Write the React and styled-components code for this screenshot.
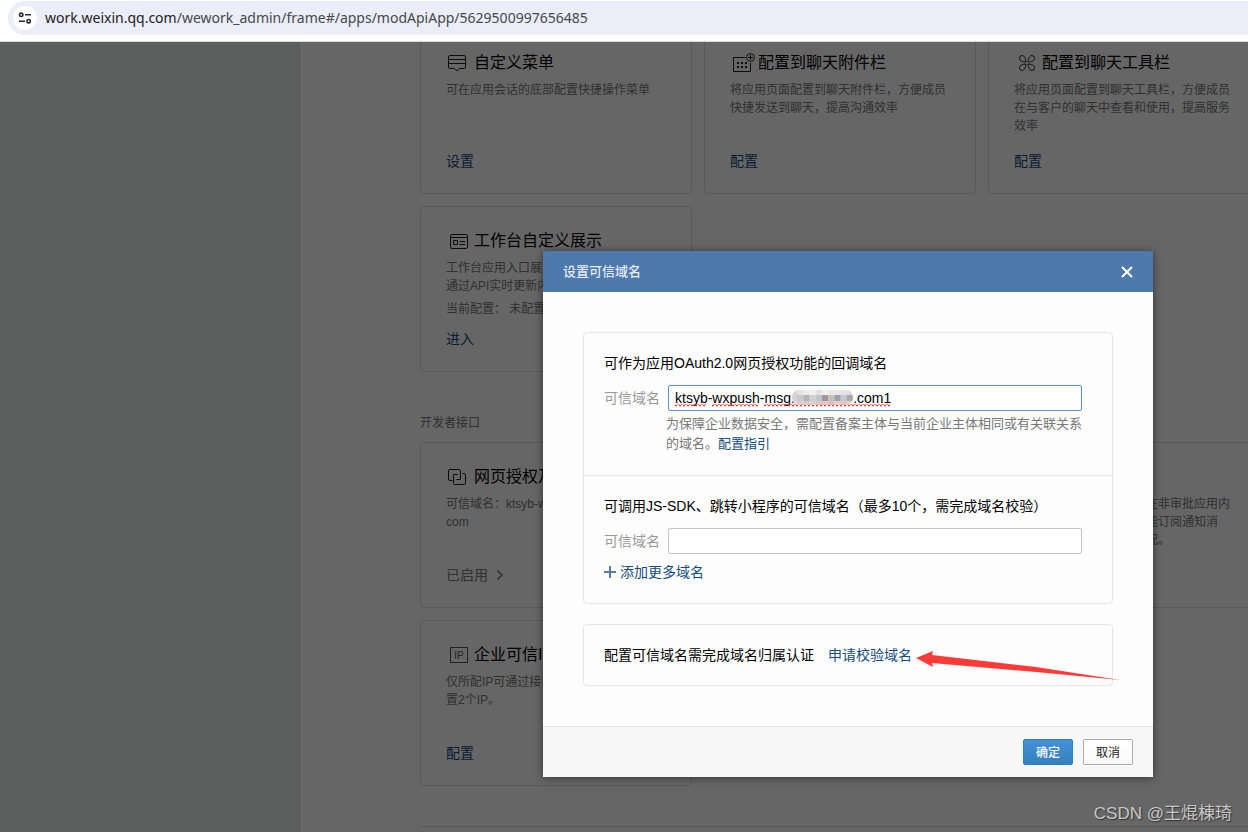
import React, { useState } from "react";
import styled, { createGlobalStyle } from "styled-components";

const GlobalStyle = createGlobalStyle`
  * {
    box-sizing: border-box;
  }

  body {
    margin: 0;
    font-family: "Liberation Sans", "Noto Sans CJK SC", sans-serif;
    font-size: 14px;
    line-height: 20px;
    color: #000;
    background: #fff;
  }

  h2, h3, p {
    margin: 0;
    font-weight: normal;
  }

  a {
    color: #144b80;
    text-decoration: none;
  }

  button, input {
    font-family: inherit;
  }
`;

const Page = styled.div`
  display: flex;
  flex-direction: column;
  height: 100vh;
  overflow: hidden;
`;

const AddressBar = styled.header`
  flex: none;
  padding: 1px 0 6px 8px;
  border-bottom: 1px solid #d9dcdc;
`;

const Address = styled.div`
  display: flex;
  align-items: center;
  gap: 8px;
  height: 34px;
  padding-left: 5px;
  border-radius: 17px 0 0 17px;
  background: #ebeef8;
  font-family: "Noto Sans", "Open Sans", sans-serif;
  font-size: 14px;
  color: #46484c;

  & b {
    font-weight: normal;
    color: #1f2023;
  }
`;

const SiteButton = styled.button`
  display: flex;
  align-items: center;
  justify-content: center;
  width: 24px;
  height: 24px;
  padding: 0;
  border: 0;
  border-radius: 50%;
  background: #fff;
`;

const Workspace = styled.div`
  position: relative;
  display: flex;
  flex: 1;
  min-height: 0;
  overflow: hidden;
`;

const Sidebar = styled.aside`
  flex: none;
  width: 300px;
  background: #e8ecea;
  border-right: 1px solid #dfe3e1;
`;

const Main = styled.main`
  flex: 1;
  min-width: 0;
  margin-top: -14px;
  padding-left: 120px;
  overflow: hidden;
`;

const CardGrid = styled.section`
  display: grid;
  grid-template-columns: repeat(3, 272px);
  grid-auto-rows: 166px;
  gap: 12px;
`;

const SectionLabel = styled.h2`
  padding: 41px 0 9px;
  font-size: 12px;
  line-height: 20px;
  color: #787878;
`;

const Divider = styled.div`
  margin-top: 40px;
  border-top: 1px solid #dfdfdf;
`;

const CardBox = styled.article`
  display: flex;
  flex-direction: column;
  padding: 22px 25px;
  border: 1px solid #dfdfdf;
  border-radius: 4px;
`;

const CardTitle = styled.h3`
  display: flex;
  align-items: center;
  font-size: 16px;
  line-height: 24px;
  white-space: nowrap;

  & svg {
    flex: none;
  }
`;

const CardText = styled.p`
  margin-top: 6px;
  font-size: 12px;
  line-height: 18px;
  color: #787878;

  & + & {
    margin-top: 5px;
  }
`;

const CardFoot = styled.div`
  display: flex;
  align-items: center;
  gap: 8px;
  margin-top: auto;
  color: #787878;
`;

const Mask = styled.div`
  position: absolute;
  inset: 0;
  padding: 209px 0 0 543px;
  background: rgba(0, 0, 0, 0.6);
`;

const Dialog = styled.div`
  position: relative;
  width: 610px;
  background: #fdfdfd;
  box-shadow: 0 1px 8px rgba(0, 0, 0, 0.5);
`;

const DialogHead = styled.div`
  display: flex;
  align-items: center;
  justify-content: space-between;
  height: 41px;
  padding: 0 20px;
  background: #4e79ad;
  color: #fff;

  & h2 {
    font-size: 13px;
    font-weight: 500;
    color: #e4ebf3;
  }
`;

const CloseButton = styled.button`
  display: flex;
  padding: 0;
  border: 0;
  background: none;
  color: #fff;
`;

const DialogBody = styled.div`
  display: flex;
  flex-direction: column;
  gap: 20px;
  padding: 40px;
`;

const Panel = styled.div`
  border: 1px solid #e4e6e9;
  border-radius: 4px;
`;

const PanelSection = styled.section`
  padding: 20px 30px 21px 20px;

  & + & {
    border-top: 1px solid #e4e6e9;
  }
`;

const PanelTitle = styled.h3`
  font-size: 14px;
`;

const VerifyRow = styled.div`
  display: flex;
  gap: 14px;
  padding: 20px;
`;

const Field = styled.div`
  display: flex;
  align-items: center;
  gap: 8px;
  margin-top: 12px;

  & label {
    flex: none;
    color: #999;
  }
`;

const InputWrap = styled.div`
  position: relative;
  flex: 1;
`;

const Input = styled.input`
  display: block;
  width: 100%;
  height: 26px;
  padding: 0 6px;
  border: 1px solid ${(props) => (props.$active ? "#5c94cd" : "#c4c4c4")};
  border-radius: 2px;
  outline: none;
  background: #fff;
  font-size: 14px;
  color: #000;
`;

const InputMarks = styled.svg`
  position: absolute;
  left: 0;
  top: 0;
  pointer-events: none;
`;

const Help = styled.p`
  margin: 3px 0 0 62px;
  font-size: 13px;
  line-height: 20px;
  color: #787878;
`;

const AddLink = styled.a`
  display: flex;
  align-items: center;
  gap: 4px;
  margin-top: 8px;
`;

const DialogFoot = styled.div`
  display: flex;
  justify-content: flex-end;
  gap: 10px;
  padding: 12px 20px;
  border-top: 1px solid #e2e4e9;
  background: #f7f7f7;
`;

const Button = styled.button`
  width: 50px;
  height: 26px;
  padding: 0 0 2px;
  border: 1px solid ${(props) => (props.$primary ? "#2a80c8" : "#acacac")};
  border-radius: 2px;
  background: ${(props) =>
    props.$primary
      ? "linear-gradient(#4591d8, #3580bb)"
      : "linear-gradient(#fff, #f9f9f9)"};
  font-size: 12px;
  font-weight: ${(props) => (props.$primary ? 500 : 400)};
  color: ${(props) => (props.$primary ? "#fff" : "#222")};
`;

const Arrow = styled.svg`
  position: absolute;
  left: 373px;
  top: 399px;
  pointer-events: none;
`;

const Watermark = styled.div`
  position: absolute;
  right: 16px;
  bottom: 8px;
  font-size: 17px;
  line-height: 20px;
  color: #c8c8c8;
  text-shadow: 1px 1px 1px #333;
`;

const icons = {
  menu: (
    <path d="M4 4.5H18Q19.5 4.5 19.5 6V16Q19.5 17.5 18 17.5H13.5L11 19.8L8.5 17.5H4Q2.5 17.5 2.5 16V6Q2.5 4.5 4 4.5ZM3 8.5H19M3 12.5H19" />
  ),
  attach: (
    <>
      <path d="M16 6.5H3.5V20.5H20.5V12" />
      <circle cx="20.5" cy="6.5" r="4" />
      <path d="M18 6.5H23M20.5 4V9" />
      <path
        d="M7 12H9M11 12H13M15 12H17M7 16H9M11 16H13M15 16H17"
        strokeWidth="2"
      />
    </>
  ),
  tools: (
    <>
      <path d="M12 11C11.5 7.5 10.5 4.5 8 4.5A2.8 2.8 0 0 0 5.5 7.5C5.5 10 8.5 10.7 12 11Z" />
      <path d="M14 11C14.5 7.5 15.5 4.5 18 4.5A2.8 2.8 0 0 1 20.5 7.5C20.5 10 17.5 10.7 14 11Z" />
      <path d="M12 13C11.5 16.5 10.5 19.5 8 19.5A2.8 2.8 0 0 1 5.5 16.5C5.5 14 8.5 13.3 12 13Z" />
      <path d="M14 13C14.5 16.5 15.5 19.5 18 19.5A2.8 2.8 0 0 0 20.5 16.5C20.5 14 17.5 13.3 14 13Z" />
    </>
  ),
  board: (
    <>
      <rect x="4.5" y="5.5" width="17" height="14" rx="1.5" />
      <path d="M5 8.5H21M7.5 11.5H11.5V15.5H7.5ZM13.5 12.5H19M13.5 15.5H19" />
    </>
  ),
  link: (
    <>
      <path d="M6.5 15.5H4Q2.5 15.5 2.5 14V6Q2.5 4.5 4 4.5H13Q14.5 4.5 14.5 6V14.5H10.5" />
      <path d="M16.5 8.5H18Q19.5 8.5 19.5 10V18Q19.5 19.5 18 19.5H8.5Q7.5 19.5 7.5 18.5V9.5H12" />
    </>
  ),
  login: <circle cx="12" cy="12.5" r="7" />,
  approve: <path d="M4.5 6.5H20.5V20.5H4.5ZM8 13L11.5 16.5L17 10.5" />,
};

function CardIcon({ name }) {
  if (name === "ip") {
    return (
      <svg width="28" height="24" fill="none" stroke="#555" aria-hidden="true">
        <rect x="4.5" y="4.5" width="17" height="15" />
        <text x="13" y="16" fontSize="10" textAnchor="middle" fill="#555" stroke="none">
          IP
        </text>
      </svg>
    );
  }
  return (
    <svg width="28" height="24" fill="none" stroke="#222" aria-hidden="true">
      {icons[name]}
    </svg>
  );
}

function Card({ icon, title, text, extra, link, status }) {
  return (
    <CardBox>
      <CardTitle>
        <CardIcon name={icon} />
        {title}
      </CardTitle>
      <CardText>{text}</CardText>
      {extra && <CardText>{extra}</CardText>}
      <CardFoot>
        {link && <a href="#config">{link}</a>}
        {status && (
          <>
            {status}
            <svg width="8" height="12" fill="none" stroke="#787878" strokeWidth="1.5">
              <path d="M1.5 1.5L6 6L1.5 10.5" />
            </svg>
          </>
        )}
      </CardFoot>
    </CardBox>
  );
}

const mosaic = [
  ["#ddd0d8", "#e4e1e5", "#ece9ed", "#eff0f0", "#e0e2e3", "#eff0ef", "#e8e9eb", "#e6e7e9", "#e2e3e6", "#dcdde0"],
  ["#ddcfd4", "#cbc7c9", "#b5b5b3", "#d0d2cf", "#bcc8c4", "#a3979f", "#c3c3b5", "#9ba0ad", "#c8c8d0", "#a9a9ab"],
  ["#f0d8db", "#e0ced1", "#d9c9c9", "#e0cfce", "#d5c7c6", "#e8c4c4", "#dfc0c0", "#ecc9ca", "#e2c2c3", "#eed0d0"],
];

function DomainMarks() {
  return (
    <InputMarks width="240" height="26" aria-hidden="true">
      <g fill="none" stroke="#f0393c" strokeWidth="1.5" strokeDasharray="2 2">
        <path d="M7 20.5H38M44 20.5H90M96 20.5H222" />
      </g>
      <g fill="none" stroke="#f0393c" strokeOpacity="0.6" strokeDasharray="2 2" strokeDashoffset="2">
        <path d="M7 19.5H38M44 19.5H90M96 19.5H222" />
      </g>
      <clipPath id="blot">
        <rect x="124" y="5" width="61" height="15" rx="7" />
      </clipPath>
      <g clipPath="url(#blot)">
        {mosaic.map((row, y) =>
          row.map((fill, x) => (
            <rect
              key={`${x}-${y}`}
              x={123 + x * 6.2}
              y={[5, 10, 16][y]}
              width="6.4"
              height={[5, 6, 5][y]}
              fill={fill}
            />
          ))
        )}
      </g>
    </InputMarks>
  );
}

function DomainDialog() {
  const [domain, setDomain] = useState(
    "ktsyb-wxpush-msg.t" + "\u00a0".repeat(14) + ".com1"
  );
  const [sdkDomain, setSdkDomain] = useState("");

  return (
    <Dialog role="dialog" aria-labelledby="dialog-title">
      <DialogHead>
        <h2 id="dialog-title">设置可信域名</h2>
        <CloseButton aria-label="关闭">
          <svg width="12" height="12" fill="none" stroke="currentColor" strokeWidth="2">
            <path d="M1 1L11 11M11 1L1 11" />
          </svg>
        </CloseButton>
      </DialogHead>

      <DialogBody>
        <Panel>
          <PanelSection>
            <PanelTitle>可作为应用OAuth2.0网页授权功能的回调域名</PanelTitle>
            <Field>
              <label htmlFor="oauth-domain">可信域名</label>
              <InputWrap>
                <Input
                  id="oauth-domain"
                  $active
                  spellCheck={false}
                  value={domain}
                  onChange={(e) => setDomain(e.target.value)}
                />
                <DomainMarks />
              </InputWrap>
            </Field>
            <Help>
              为保障企业数据安全，需配置备案主体与当前企业主体相同或有关联关系的域名。
              <a href="#guide">配置指引</a>
            </Help>
          </PanelSection>
          <PanelSection>
            <PanelTitle>
              可调用JS-SDK、跳转小程序的可信域名（最多10个，需完成域名校验）
            </PanelTitle>
            <Field>
              <label htmlFor="sdk-domain">可信域名</label>
              <InputWrap>
                <Input
                  id="sdk-domain"
                  value={sdkDomain}
                  onChange={(e) => setSdkDomain(e.target.value)}
                />
              </InputWrap>
            </Field>
            <AddLink href="#add">
              <svg width="12" height="12" stroke="#5b7da3" strokeWidth="2">
                <path d="M0 6H12M6 0V12" />
              </svg>
              添加更多域名
            </AddLink>
          </PanelSection>
        </Panel>

        <Panel>
          <VerifyRow>
            <span>配置可信域名需完成域名归属认证</span>
            <a href="#verify">申请校验域名</a>
          </VerifyRow>
        </Panel>
      </DialogBody>

      <DialogFoot>
        <Button $primary>确定</Button>
        <Button>取消</Button>
      </DialogFoot>

      <Arrow width="206" height="32" aria-hidden="true">
        <path d="M0 8L17 1L16 5L120 17L204 30L120 22L16 13L17 17Z" fill="#ff3a37" />
      </Arrow>
    </Dialog>
  );
}

function App() {
  return (
    <Page>
      <GlobalStyle />
      <AddressBar>
        <Address>
          <SiteButton aria-label="网站信息">
            <svg width="14" height="12" fill="none" stroke="#2c2d30" strokeWidth="1.6">
              <circle cx="3.2" cy="2.8" r="1.7" />
              <path d="M7 2.8H13M1 9.2H7" />
              <circle cx="10.6" cy="9.2" r="1.7" />
            </svg>
          </SiteButton>
          <span>
            <b>work.weixin.qq.com</b>
            /wework_admin/frame#/apps/modApiApp/5629500997656485
          </span>
        </Address>
      </AddressBar>

      <Workspace>
        <Sidebar />
        <Main>
          <CardGrid>
            <Card
              icon="menu"
              title="自定义菜单"
              text="可在应用会话的底部配置快捷操作菜单"
              link="设置"
            />
            <Card
              icon="attach"
              title="配置到聊天附件栏"
              text="将应用页面配置到聊天附件栏，方便成员快捷发送到聊天，提高沟通效率"
              link="配置"
            />
            <Card
              icon="tools"
              title="配置到聊天工具栏"
              text="将应用页面配置到聊天工具栏，方便成员在与客户的聊天中查看和使用，提高服务效率"
              link="配置"
            />
            <Card
              icon="board"
              title="工作台自定义展示"
              text={
                <>
                  工作台应用入口展示自定义内容
                  <br />
                  通过API实时更新内容
                </>
              }
              extra="当前配置： 未配置"
              link="进入"
            />
          </CardGrid>

          <SectionLabel>开发者接口</SectionLabel>
          <CardGrid>
            <Card
              icon="link"
              title="网页授权及JS-SDK"
              text={
                <>
                  可信域名：ktsyb-wxpush-msg.
                  <br />
                  com
                </>
              }
              status="已启用"
            />
            <Card icon="login" title="企业微信授权登录" link="设置" />
            <Card
              icon="approve"
              title="审批接口"
              text="审批接口，支持自建应用在非审批应用内接入审批流程，且应用也能订阅通知消息，及时了解审批单的状况。"
              link="设置"
            />
            <Card
              icon="ip"
              title="企业可信IP"
              text="仅所配IP可通过接口获取企业数据，已配置2个IP。"
              link="配置"
            />
          </CardGrid>
          <Divider />
        </Main>

        <Mask>
          <DomainDialog />
        </Mask>
        <Watermark>CSDN @王焜棟琦</Watermark>
      </Workspace>
    </Page>
  );
}

export default App;
